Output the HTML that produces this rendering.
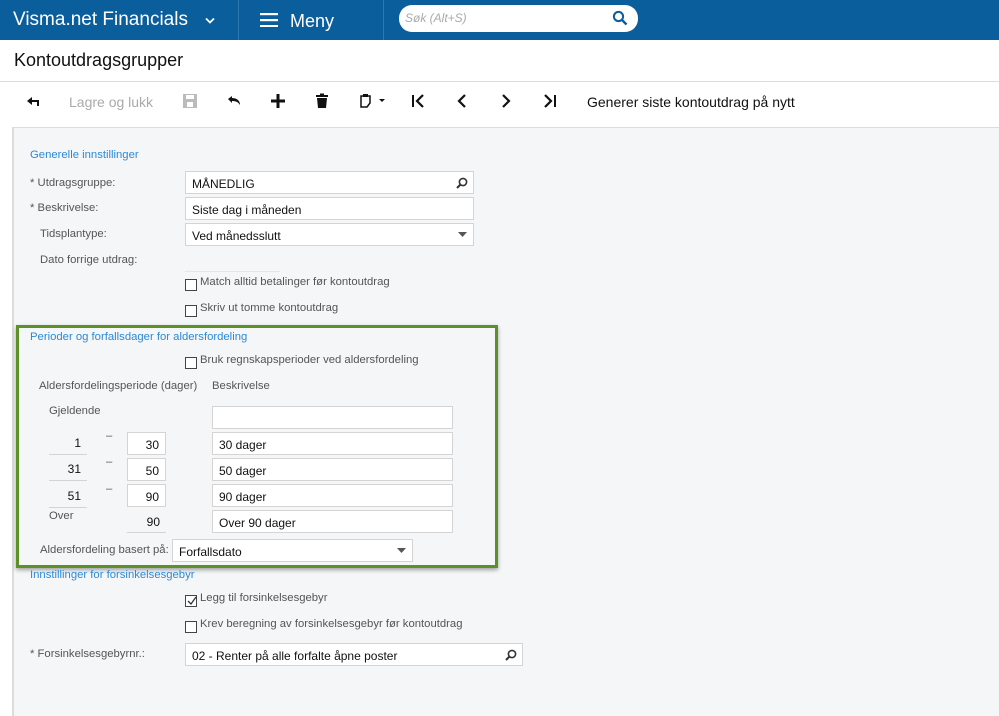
<!DOCTYPE html>
<html><head><meta charset="utf-8"><style>
*{box-sizing:border-box;margin:0;padding:0}
body{width:999px;height:716px;overflow:hidden;background:#fff;font-family:"Liberation Sans",Arial,sans-serif;position:relative}
.a{position:absolute;white-space:nowrap}
#hdr{position:absolute;left:0;top:0;width:999px;height:40px;background:#0b5e9c}
.div{position:absolute;top:0;width:1px;height:40px;background:#2f78ad}
#panel{position:absolute;left:12px;top:127px;width:987px;height:589px;background:#f5f6f8;border-top:1px solid #dcdcdc;border-left:2px solid #dcdcdc}
.lbl{position:absolute;font-size:11.3px;color:#555;white-space:nowrap}
.sec{position:absolute;font-size:11.3px;color:#2a8ad6;white-space:nowrap}
.inp{position:absolute;height:23px;background:#fff;border:1px solid #d4d4d4;font-size:12px;color:#111;padding:5px 6px;white-space:nowrap}
.cb{position:absolute;width:12px;height:12px;border:1px solid #444;background:#fff}
.ul{position:absolute;height:1px;background:#d4d4d4}
.num{position:absolute;font-size:12px;color:#111;text-align:right}
.ico{position:absolute;top:93px}
</style></head><body>
<div id="hdr">
<div class="a" style="left:13px;top:9px;font-size:19px;color:#fff">Visma.net Financials</div>
<svg class="a" style="left:205px;top:17px" width="10" height="8"><path d="M1 1.5L5 5.5L9 1.5" stroke="#fff" stroke-width="1.8" fill="none"/></svg>
<div class="div" style="left:238px"></div>
<svg class="a" style="left:260px;top:13px" width="18" height="14"><rect y="0" width="18" height="2.2" fill="#fff"/><rect y="6" width="18" height="2.2" fill="#fff"/><rect y="12" width="18" height="2.2" fill="#fff"/></svg>
<div class="a" style="left:290px;top:11px;font-size:18px;color:#fff">Meny</div>
<div class="div" style="left:383px"></div>
<div class="a" style="left:399px;top:5px;width:239px;height:27px;background:#fff;border-radius:13px"></div>
<div class="a" style="left:405px;top:11px;font-size:12px;color:#aaa;font-style:italic">Søk (Alt+S)</div>
<svg class="a" style="left:612px;top:10px" width="16" height="16"><circle cx="6.5" cy="6.5" r="4.6" stroke="#0b5e9c" stroke-width="2" fill="none"/><path d="M10 10L14.5 14.5" stroke="#0b5e9c" stroke-width="2.4"/></svg>
</div>
<div class="a" style="left:14px;top:50px;font-size:18px;color:#111">Kontoutdragsgrupper</div>
<div class="a" style="left:0;top:81px;width:999px;height:1px;background:#dcdcdc"></div>
<svg class="ico" style="left:26px" width="16" height="16"><path d="M1 8L6 4V7H13V13H11V9H6V12Z" fill="#111"/></svg>
<div class="a" style="left:69px;top:94px;font-size:14px;color:#aaa">Lagre og lukk</div>
<svg class="ico" style="left:182px" width="16" height="16"><rect x="1" y="1" width="14" height="14" fill="#bbb"/><rect x="4" y="2" width="8" height="4" fill="#fff"/><rect x="5" y="9" width="6" height="5" fill="#fff"/></svg>
<svg class="ico" style="left:226px" width="16" height="16"><path d="M2 6L6 3V5C10 5 14 7 14 12C12 9 10 8 6 8V10Z" fill="#111"/></svg>
<svg class="ico" style="left:270px" width="16" height="16"><rect x="6.5" y="1" width="3" height="14" fill="#111"/><rect x="1" y="6.5" width="14" height="3" fill="#111"/></svg>
<svg class="ico" style="left:314px" width="16" height="16"><rect x="2" y="2" width="12" height="2" fill="#111"/><rect x="6" y="0.5" width="4" height="2" fill="#111"/><path d="M3 5H13L12 15H4Z" fill="#111"/></svg>
<svg class="ico" style="left:358px" width="32" height="16"><path d="M3 3H12V10L9 14H3Z" stroke="#111" stroke-width="1.5" fill="none"/><rect x="5" y="1" width="5" height="3" fill="#111"/><path d="M21 6H27L24 9Z" fill="#111"/></svg>
<svg class="ico" style="left:410px" width="16" height="16"><rect x="2" y="2" width="2" height="12" fill="#111"/><path d="M13 2L7 8L13 14" stroke="#111" stroke-width="2.2" fill="none"/></svg>
<svg class="ico" style="left:454px" width="16" height="16"><path d="M11 2L5 8L11 14" stroke="#111" stroke-width="2.2" fill="none"/></svg>
<svg class="ico" style="left:498px" width="16" height="16"><path d="M5 2L11 8L5 14" stroke="#111" stroke-width="2.2" fill="none"/></svg>
<svg class="ico" style="left:542px" width="16" height="16"><path d="M3 2L9 8L3 14" stroke="#111" stroke-width="2.2" fill="none"/><rect x="12" y="2" width="2" height="12" fill="#111"/></svg>
<div class="a" style="left:587px;top:94px;font-size:14px;color:#111">Generer siste kontoutdrag på nytt</div>
<div id="panel"></div>

<div class="sec" style="left:30px;top:149px">Generelle innstillinger</div>
<div class="lbl" style="left:30px;top:177px">* Utdragsgruppe:</div>
<div class="inp" style="left:185px;top:171px;width:289px">MÅNEDLIG</div>
<svg class="a" style="left:456px;top:177px" width="12" height="12"><circle cx="7" cy="5" r="3.6" stroke="#333" stroke-width="1.6" fill="none"/><path d="M4.5 7.5L1 11" stroke="#333" stroke-width="2"/></svg>
<div class="lbl" style="left:30px;top:202px">* Beskrivelse:</div>
<div class="inp" style="left:185px;top:197px;width:289px">Siste dag i måneden</div>
<div class="lbl" style="left:40px;top:228px">Tidsplantype:</div>
<div class="inp" style="left:185px;top:223px;width:289px">Ved månedsslutt</div>
<svg class="a" style="left:458px;top:232px" width="9" height="5"><path d="M0 0H9L4.5 5Z" fill="#555"/></svg>
<div class="lbl" style="left:40px;top:254px">Dato forrige utdrag:</div>
<div class="ul" style="left:185px;top:271px;width:95px;background:#e6e6e6"></div>
<div class="cb" style="left:185px;top:279px"></div>
<div class="lbl" style="left:200px;top:276px">Match alltid betalinger før kontoutdrag</div>
<div class="cb" style="left:185px;top:305px"></div>
<div class="lbl" style="left:200px;top:302px">Skriv ut tomme kontoutdrag</div>

<div class="a" style="left:16px;top:325px;width:482px;height:243px;border:3px solid #5b9127;box-shadow:0 2px 4px rgba(0,0,0,.35)"></div>
<div class="sec" style="left:30px;top:331px">Perioder og forfallsdager for aldersfordeling</div>
<div class="cb" style="left:185px;top:357px"></div>
<div class="lbl" style="left:200px;top:354px">Bruk regnskapsperioder ved aldersfordeling</div>
<div class="lbl" style="left:39px;top:380px">Aldersfordelingsperiode (dager)</div>
<div class="lbl" style="left:212px;top:380px">Beskrivelse</div>
<div class="lbl" style="left:49px;top:405px">Gjeldende</div>
<div class="inp" style="left:212px;top:406px;width:241px"></div>

<div class="num" style="left:49px;top:436px;width:32px">1</div><div class="ul" style="left:49px;top:454px;width:38px"></div>
<div class="lbl" style="left:106px;top:430px">–</div>
<div class="inp" style="left:127px;top:432px;width:39px;text-align:right">30</div>
<div class="inp" style="left:212px;top:432px;width:241px">30 dager</div>

<div class="num" style="left:49px;top:462px;width:32px">31</div><div class="ul" style="left:49px;top:480px;width:38px"></div>
<div class="lbl" style="left:106px;top:456px">–</div>
<div class="inp" style="left:127px;top:458px;width:39px;text-align:right">50</div>
<div class="inp" style="left:212px;top:458px;width:241px">50 dager</div>

<div class="num" style="left:49px;top:489px;width:32px">51</div><div class="ul" style="left:49px;top:507px;width:38px"></div>
<div class="lbl" style="left:106px;top:483px">–</div>
<div class="inp" style="left:127px;top:484px;width:39px;text-align:right">90</div>
<div class="inp" style="left:212px;top:484px;width:241px">90 dager</div>

<div class="lbl" style="left:49px;top:510px">Over</div>
<div class="num" style="left:127px;top:515px;width:33px">90</div><div class="ul" style="left:127px;top:532px;width:39px"></div>
<div class="inp" style="left:212px;top:510px;width:241px">Over 90 dager</div>

<div class="lbl" style="left:40px;top:544px">Aldersfordeling basert på:</div>
<div class="inp" style="left:172px;top:539px;width:241px">Forfallsdato</div>
<svg class="a" style="left:397px;top:548px" width="9" height="5"><path d="M0 0H9L4.5 5Z" fill="#555"/></svg>

<div class="sec" style="left:30px;top:569px">Innstillinger for forsinkelsesgebyr</div>
<div class="cb" style="left:185px;top:595px"></div>
<svg class="a" style="left:186px;top:595px" width="12" height="12"><path d="M2 6L5 9L10 2" stroke="#333" stroke-width="1.3" fill="none"/></svg>
<div class="lbl" style="left:200px;top:592px">Legg til forsinkelsesgebyr</div>
<div class="cb" style="left:185px;top:621px"></div>
<div class="lbl" style="left:200px;top:618px">Krev beregning av forsinkelsesgebyr før kontoutdrag</div>
<div class="lbl" style="left:30px;top:648px">* Forsinkelsesgebyrnr.:</div>
<div class="inp" style="left:185px;top:643px;width:338px">02 - Renter på alle forfalte åpne poster</div>
<svg class="a" style="left:505px;top:649px" width="12" height="12"><circle cx="7" cy="5" r="3.6" stroke="#333" stroke-width="1.6" fill="none"/><path d="M4.5 7.5L1 11" stroke="#333" stroke-width="2"/></svg>
</body></html>
